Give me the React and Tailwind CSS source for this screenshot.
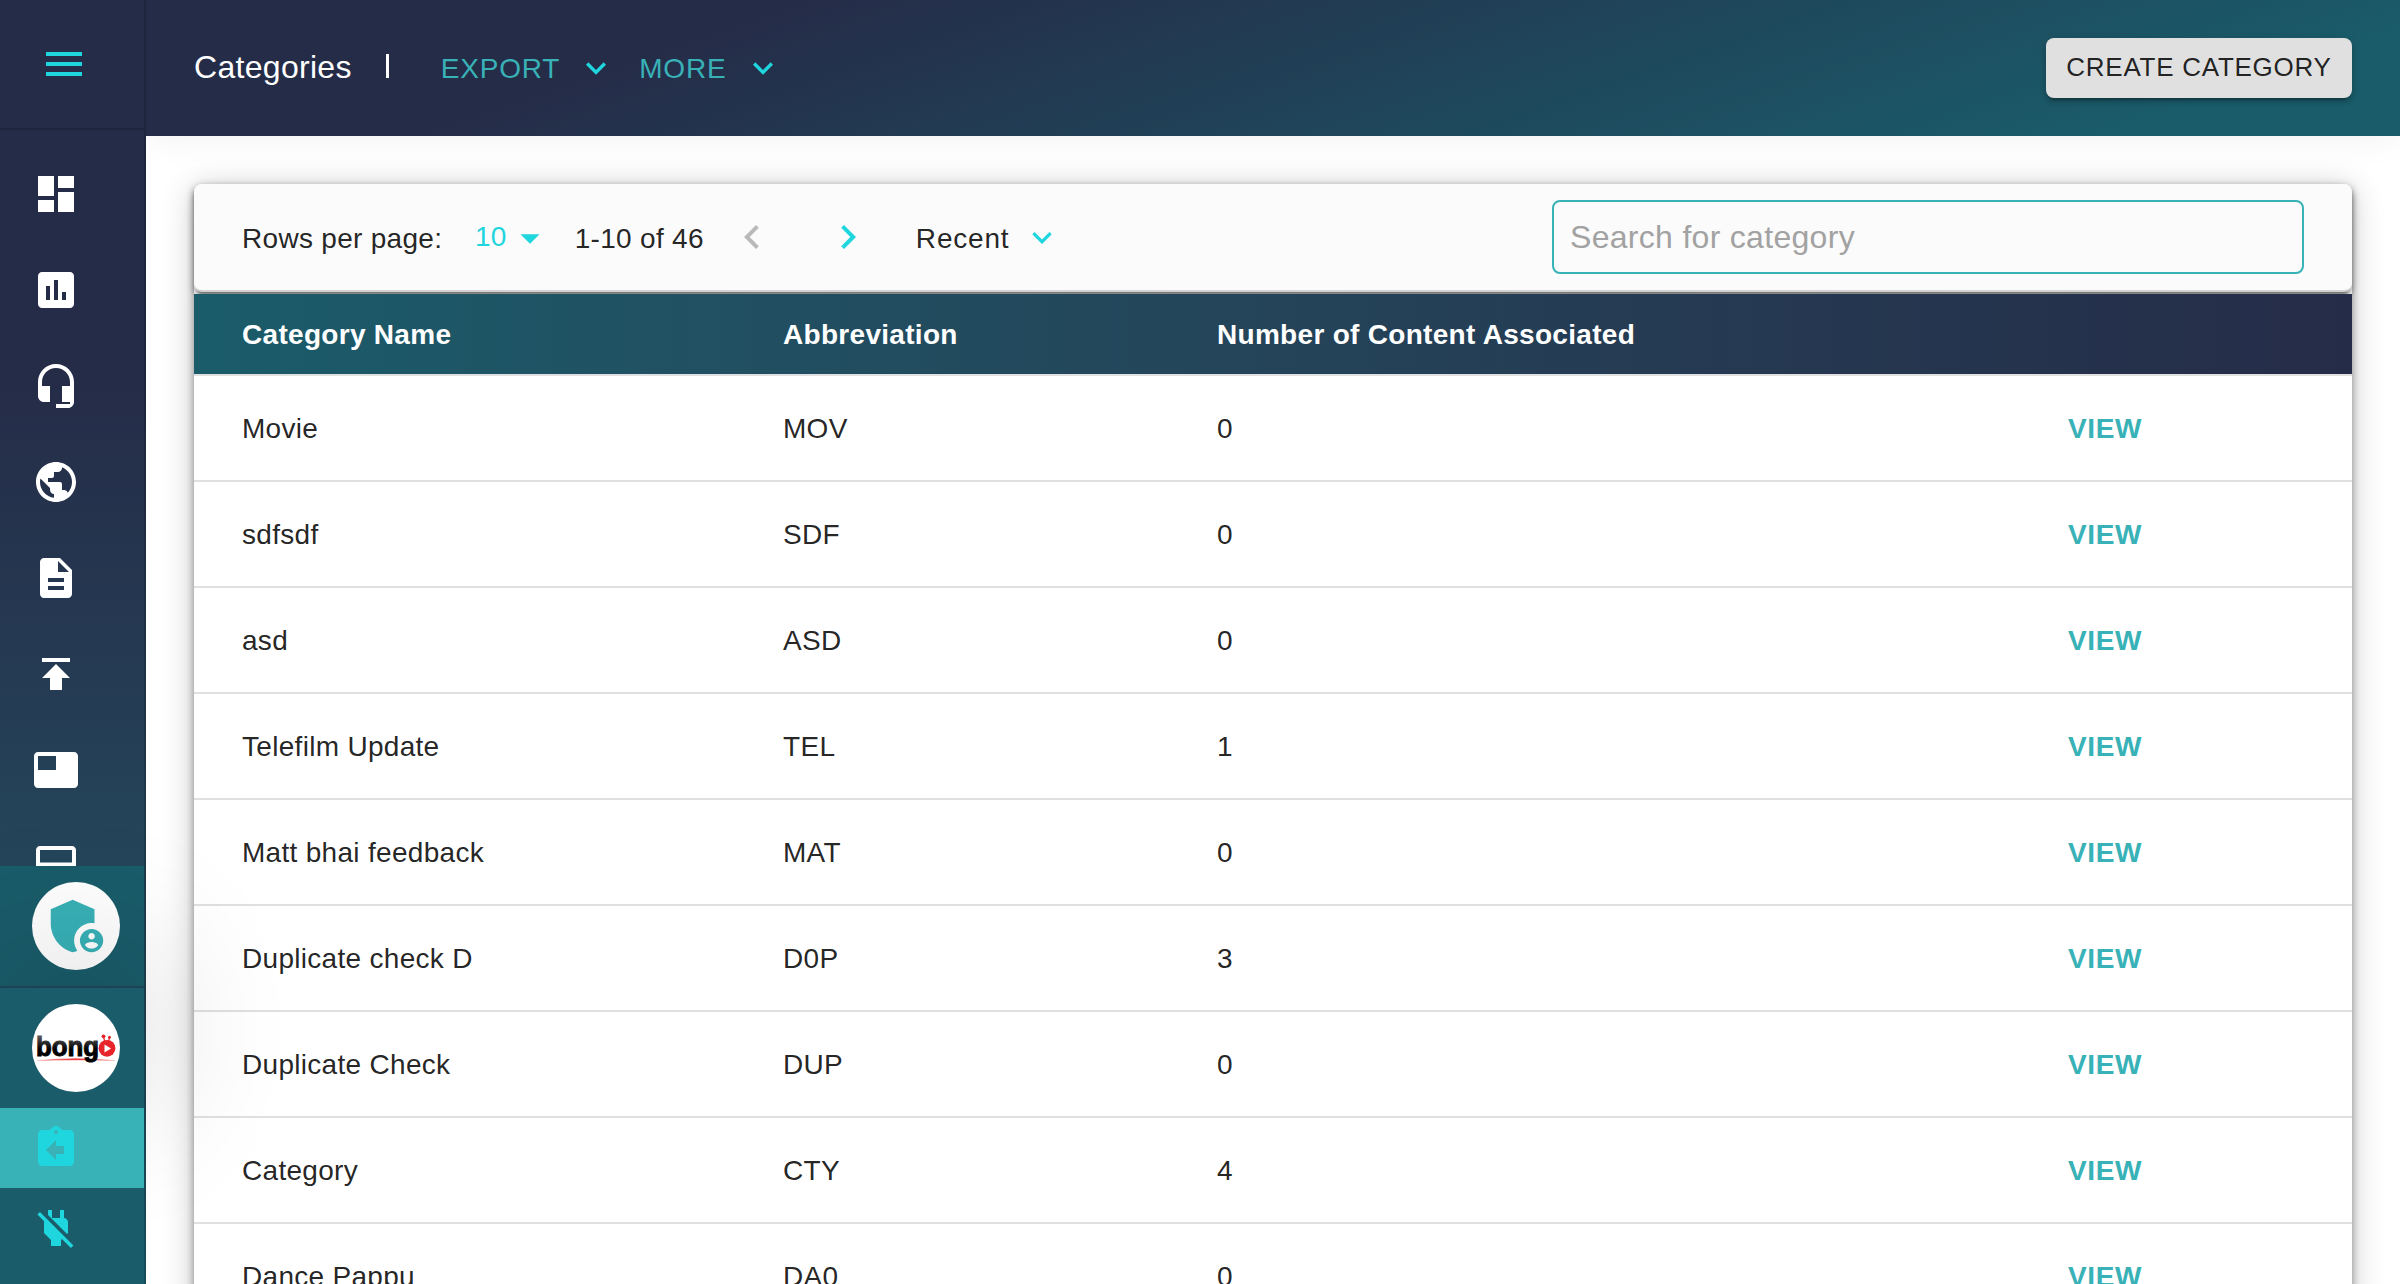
import React from "react";
import { MdMenu, MdDashboard, MdAssessment, MdPublic, MdDescription, MdPublish, MdAssignmentReturn, MdExpandMore, MdArrowDropDown, MdChevronLeft, MdChevronRight } from "react-icons/md";

const navIcons = [
  MdDashboard,
  MdAssessment,
  "M12 1c-4.97 0-9 4.03-9 9v7c0 1.66 1.34 3 3 3h3v-8H5v-2c0-3.87 3.13-7 7-7s7 3.13 7 7v2h-4v8h4v1h-7v2h6c1.66 0 3-1.34 3-3V10c0-4.97-4.03-9-9-9z",
  MdPublic,
  MdDescription,
  MdPublish,
  "M21 3H3c-1.1 0-2 .9-2 2v14c0 1.1.9 2 2 2h18c1.1 0 2-.9 2-2V5c0-1.1-.9-2-2-2zM12 12H3V5h9v7z",
  "M20 2H4c-1.1 0-2 .9-2 2v16c0 1.1.9 2 2 2h16c1.1 0 2-.9 2-2V4c0-1.1-.9-2-2-2zm0 8.200H4V4h16v6.200z",
];

const rows = [
  ["Movie", "MOV", "0"],
  ["sdfsdf", "SDF", "0"],
  ["asd", "ASD", "0"],
  ["Telefilm Update", "TEL", "1"],
  ["Matt bhai feedback", "MAT", "0"],
  ["Duplicate check D", "D0P", "3"],
  ["Duplicate Check", "DUP", "0"],
  ["Category", "CTY", "4"],
  ["Dance Pappu", "DA0", "0"],
];

function NavIcon({ icon: Icon }) {
  return (
    <li className="flex h-24 shrink-0 items-center pl-8">
      {typeof Icon === "string" ? (
        <svg viewBox="0 0 24 24" className="size-12" fill="currentColor"><path d={Icon} /></svg>
      ) : (
        <Icon className="size-12" />
      )}
    </li>
  );
}

function ShieldIcon() {
  return (
    <svg viewBox="0 0 24 24" className="ml-0.5 size-[70px] text-[#38b1b7]" fill="currentColor">
      <path d="M17 11c.34 0 .67.04 1 .09V6.27L10.5 3 3 6.27v4.91c0 4.54 3.2 8.79 7.5 9.82.55-.13 1.08-.32 1.6-.55-.69-.98-1.1-2.17-1.1-3.45 0-3.31 2.69-6 6-6z" />
      <path d="M17 13c-2.21 0-4 1.79-4 4s1.79 4 4 4 4-1.79 4-4-1.79-4-4-4zm0 1.38c.62 0 1.12.51 1.12 1.12s-.51 1.12-1.12 1.12-1.12-.51-1.12-1.12.5-1.12 1.12-1.12zm0 5.37c-.93 0-1.74-.46-2.24-1.17.05-.72 1.51-1.08 2.24-1.08s2.19.36 2.24 1.08c-.5.71-1.31 1.17-2.24 1.17z" />
    </svg>
  );
}

function BongoLogo() {
  return (
    <svg viewBox="0 0 88 88" className="size-[88px]">
      <defs>
        <linearGradient id="ink" x1="0" y1="0" x2="0" y2="1">
          <stop offset="0.2" stopColor="#555" />
          <stop offset="0.6" stopColor="#000" />
        </linearGradient>
        <linearGradient id="swoosh" x1="0" x2="1">
          <stop offset="0" stopColor="#e8242a" stopOpacity="0.2" />
          <stop offset="0.5" stopColor="#e8242a" />
          <stop offset="1" stopColor="#e8242a" stopOpacity="0.2" />
        </linearGradient>
      </defs>
      <path d="M5 56.500Q44 53 83 56.500Q44 55 5 56.500Z" fill="url(#swoosh)" stroke="url(#swoosh)" strokeWidth="0.6" />
      <text x="4" y="51.500" fontSize="27.500" fontWeight="700" textLength="63" lengthAdjust="spacingAndGlyphs" fill="url(#ink)" stroke="url(#ink)" strokeWidth="1" fontFamily="Liberation Sans, sans-serif">bong</text>
      <circle cx="75" cy="44.300" r="8.400" fill="#e8242a" />
      <path d="M72.500 40.500l6.500 4-6.500 4z" fill="#fff" />
      <path d="M71.500 33l1.500 5M77.500 33.500l-1 4" stroke="#e8242a" strokeWidth="1.200" />
      <circle cx="71.500" cy="32.300" r="1.900" fill="#e8242a" />
      <circle cx="77.500" cy="33.200" r="1.500" fill="#e8242a" />
    </svg>
  );
}

function Sidebar() {
  return (
    <aside className="flex h-full w-[146px] shrink-0 flex-col border-r-2 border-black/15 bg-linear-to-b from-[#252c48] from-30% to-[#1a5c6a] bg-origin-border">
      <div className="flex h-[130px] shrink-0 items-center border-b-2 border-black/15 pl-10">
        <MdMenu className="size-12 text-[#1fd5de]" />
      </div>
      <ul className="flex h-[736px] shrink-0 flex-col overflow-hidden pt-4 text-white">
        {navIcons.map((icon, i) => (
          <NavIcon key={i} icon={icon} />
        ))}
      </ul>
      <div className="flex flex-1 flex-col bg-[#1a5c6a]">
        <div className="flex h-[122px] shrink-0 items-center border-b-2 border-[#20475c] pl-8">
          <div className="flex size-[88px] items-center justify-center rounded-full bg-white">
            <ShieldIcon />
          </div>
        </div>
        <div className="relative z-10 h-[120px] shrink-0 bg-[#1a5c6a] pt-4 pl-8 shadow-[0_-20px_140px_20px_rgba(0,0,0,0.13)]">
          <div className="size-[88px] rounded-full bg-white">
            <BongoLogo />
          </div>
        </div>
        <div className="relative z-10 flex h-20 shrink-0 items-center bg-[#38b1b7] pl-8 text-[#1fd5de]">
          <MdAssignmentReturn className="size-12" />
        </div>
        <div className="relative z-10 flex h-24 shrink-0 items-start bg-[#1a5c6a] pt-4 pl-8 text-[#1fd5de]">
          <svg viewBox="0 0 24 24" className="size-12" fill="currentColor">
            <path d="M18 14.490V9c0-1-1.010-2.010-2-2V3h-2v4h-4V3H8v2.480l9.510 9.500.49-.49zm-1.760 1.770L7.200 7.200l-.01.01L3.980 4 2.710 5.250l3.360 3.360C6.040 8.740 6 8.870 6 9v5.480L9.500 18v3h5v-3l.48-.48L19.450 22l1.260-1.280-4.470-4.460z" />
          </svg>
        </div>
      </div>
    </aside>
  );
}

function Header() {
  return (
    <header className="flex h-[136px] shrink-0 items-center bg-linear-[161deg] from-[#252c48] from-25% to-[#1a5c6a] to-89% px-12 shadow-[0_2px_32px_rgba(0,0,0,0.06)]">
      <h1 className="pb-0.5 text-[32px] tracking-[0.3px] text-white">Categories</h1>
      <span className="mb-1 ml-[34px] h-6 w-[3px] bg-white" />
      <button className="ml-[52px] flex items-center text-[28px] tracking-[0.8px] text-[#38b1b7]">
        <span className="pt-px">EXPORT</span> <MdExpandMore className="ml-[16px] size-10 text-[#1fd5de]" />
      </button>
      <button className="ml-[23px] flex items-center text-[28px] tracking-[0.8px] text-[#38b1b7]">
        <span className="pt-px">MORE</span> <MdExpandMore className="ml-[17px] size-10 text-[#1fd5de]" />
      </button>
      <button className="ml-auto flex h-[60px] w-[306px] items-center justify-center rounded-lg bg-[#e0e0e0] pb-0.5 text-[26px] tracking-[0.74px] whitespace-nowrap text-black/87 shadow-[0_6px_2px_-4px_rgba(0,0,0,0.2),0_4px_4px_rgba(0,0,0,0.14),0_2px_10px_rgba(0,0,0,0.12)]">
        CREATE CATEGORY
      </button>
    </header>
  );
}

function Toolbar() {
  return (
    <div className="flex h-[108px] shrink-0 items-center rounded-lg border-b-2 border-[#d3d3d3] bg-[#fbfbfb] px-12 tracking-[0.3px] shadow-[0_6px_2px_-4px_rgba(0,0,0,0.3),0_4px_4px_rgba(0,0,0,0.3),0_2px_10px_rgba(0,0,0,0.12)]">
      <span className="w-[233px] pt-1">Rows per page:</span>
      <span className="text-[#1fd5de]">10</span>
      <MdArrowDropDown className="-ml-px size-12 pt-0.5 text-[#1fd5de]" />
      <span className="ml-[21px] pt-1">1-10 of 46</span>
      <MdChevronLeft className="ml-[24px] size-12 text-[#b9b9b9]" />
      <MdChevronRight className="ml-[48px] size-12 text-[#1fd5de]" />
      <span className="ml-[44px] pt-1 tracking-[0.8px]">Recent</span>
      <MdExpandMore className="ml-[13px] size-10 pt-px text-[#1fd5de]" />
      <input
        placeholder="Search for category"
        className="ml-auto h-[74px] w-[752px] rounded-lg border-2 border-[#38b1b7] px-4 text-[32px] tracking-[0.3px] outline-none placeholder:text-[#a2a2a2]"
      />
    </div>
  );
}

const grid = "grid grid-cols-[541px_434px_851px_1fr] items-center border-b-2 border-[#e0e0e0] pt-0.5 pl-12";

export default function App() {
  return (
    <div className="flex h-[1284px] w-[2400px] overflow-hidden bg-white font-['Liberation_Sans',Arial,sans-serif] text-[28px] leading-normal text-black/87">
      <div className="relative z-10 h-full"><Sidebar /></div>
      <div className="flex min-w-0 flex-1 flex-col">
        <Header />
        <main className="flex-1 px-12 pt-12">
          <div className="flex h-[1200px] flex-col gap-0.5 rounded-lg bg-white shadow-[0_4px_8px_rgba(0,0,0,0.4),0_4px_32px_rgba(0,0,0,0.22)]">
            <Toolbar />
            <div className="tracking-[0.3px]">
              <div className={grid + " h-[82px] bg-linear-to-r from-[#1a5c6a] to-[#252c48] font-bold text-white"}>
                <span>Category Name</span>
                <span>Abbreviation</span>
                <span>Number of Content Associated</span>
              </div>
              {rows.map(([name, abbr, count]) => (
                <div key={name} className={grid + " h-[106px]"}>
                  <span>{name}</span>
                  <span>{abbr}</span>
                  <span>{count}</span>
                  <button className="text-left font-bold tracking-[0.6px] text-[#38b1b7]">VIEW</button>
                </div>
              ))}
            </div>
          </div>
        </main>
      </div>
    </div>
  );
}
